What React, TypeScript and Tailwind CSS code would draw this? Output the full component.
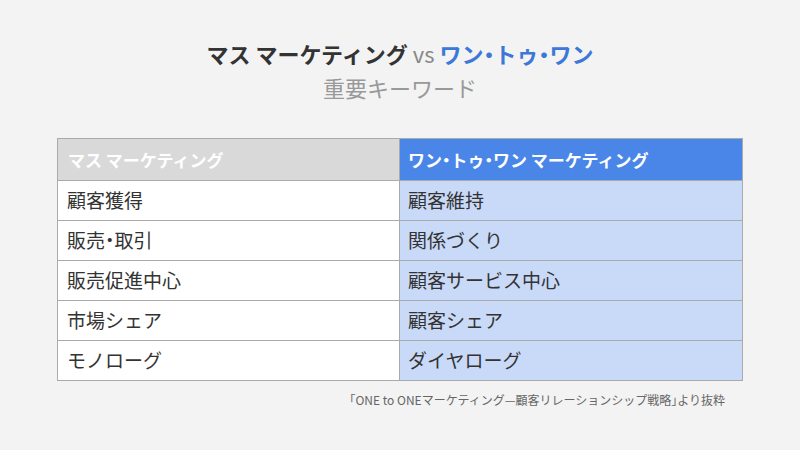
import React from 'react';

const font = { fontFamily: '"Noto Sans CJK JP", "Noto Sans", sans-serif' };

// half-width punctuation, like the proportional font in the slide
function Half({ children }: { children: React.ReactNode }) {
  return <span className="[font-feature-settings:'halt']">{children}</span>;
}

const ROWS: [React.ReactNode, React.ReactNode][] = [
  ['顧客獲得', '顧客維持'],
  [<>販売<Half>・</Half>取引</>, '関係づくり'],
  ['販売促進中心', '顧客サービス中心'],
  ['市場シェア', '顧客シェア'],
  ['モノローグ', 'ダイヤローグ'],
];

export default function App() {
  return (
    <div className="w-[800px] h-[450px] bg-[#f3f3f3] flex flex-col items-center" style={font}>
      <div className="mt-[37px] text-[22px] leading-[32px] font-bold text-[#333333]">
        マス マーケティング <span className="font-normal text-[#888888]">vs</span>{' '}
        <span className="text-[#3c78d8]">
          ワン<Half>・</Half>トゥ<Half>・</Half>ワン
        </span>
      </div>
      <div className="text-[22px] leading-[32px] text-[#999999] mt-[2px]">重要キーワード</div>

      <div className="mt-[35px] w-[686px] border border-[#aaaaaa] grid grid-cols-2">
        <div className="h-[41px] bg-[#d9d9d9] border-r border-[#aaaaaa] flex items-center pl-[10px] text-[17px] font-bold text-white">
          マス マーケティング
        </div>
        <div className="h-[41px] bg-[#4a86e8] flex items-center pl-[8px] text-[17px] font-bold text-white">
          <span>
            ワン<Half>・</Half>トゥ<Half>・</Half>ワン マーケティング
          </span>
        </div>
        {ROWS.map(([a, b], i) => (
          <React.Fragment key={i}>
            <div className="h-[40px] bg-white border-t border-r border-[#aaaaaa] flex items-center pl-[9px] text-[19px] text-[#333333]">
              <span>{a}</span>
            </div>
            <div className="h-[40px] bg-[#c9daf8] border-t border-[#aaaaaa] flex items-center pl-[8px] text-[19px] text-[#333333]">
              <span>{b}</span>
            </div>
          </React.Fragment>
        ))}
      </div>

      <div className="w-[686px] text-right mt-[10px] pr-[18px] text-[12px] text-[#666666]">
        <Half>「</Half>ONE to ONEマーケティング—顧客リレーションシップ戦略<Half>」</Half>より抜粋
      </div>
    </div>
  );
}
